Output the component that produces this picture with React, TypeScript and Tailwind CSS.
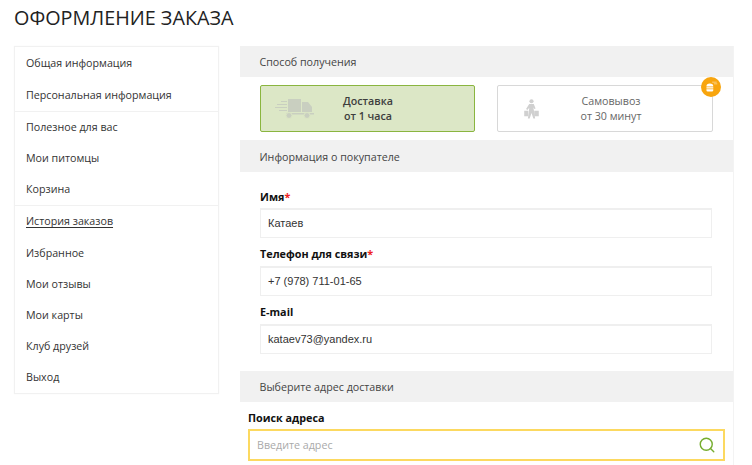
import React from 'react';
import { Search } from 'lucide-react';

const menuGroups = [
  ['Общая информация', 'Персональная информация'],
  ['Полезное для вас', 'Мои питомцы', 'Корзина'],
  ['История заказов', 'Избранное', 'Мои отзывы', 'Мои карты', 'Клуб друзей', 'Выход'],
];

const SectionHeader = ({ title, height }: { title: string; height: string }) => (
  <div className={`${height} flex items-center bg-[#f1f1f1] pl-[19.500px] pt-[2px] text-[10.700px] text-[#444]`}>{title}</div>
);

const Field = ({ label, value, required, top, gap }: { label: string; value: string; required?: boolean; top: string; gap: string }) => (
  <div className={top}>
    <div className="h-[17px] text-[10.800px] leading-[17px] font-bold text-[#111]">
      {label}
      {required && <span className="text-[#ee2222]">*</span>}
    </div>
    <div className={`${gap} h-[30px] w-[452px] border border-t-2 border-[#efefef] pl-[7px] font-['Liberation_Sans',sans-serif] text-[11px] leading-[26px] text-[#333]`}>
      {value}
    </div>
  </div>
);

const TruckIcon = () => (
  <svg width="39" height="20" viewBox="0 0 39 20" fill="#c9cfc0">
    <path d="M13 0h13v13H13zM27 3h6l4 5v5H27z" />
    <path d="M6 2h6v1H6zM2 5h10v1H2zM0 8h12v1H0zM4 11h8v1H4z" />
    <path d="M11 14h28v1.500H11z" />
    <circle cx="14" cy="16.500" r="3" stroke="#dbe6c4" />
    <circle cx="32" cy="16.500" r="3" stroke="#dbe6c4" />
  </svg>
);

const PickupIcon = () => (
  <svg width="15" height="20" viewBox="0 0 16 22" fill="#d0d0d0">
    <circle cx="8" cy="2.500" r="2.300" />
    <path d="M5.500 5.500h5l2 5-1.500.5-1-2 1 5.500 1 7h-2l-2-6-2 6h-2l1-7 .5-5-2 2.500-1.500-1z" />
    <path d="M0 13h4.500v6H0zM11 13h5v6h-5z" />
  </svg>
);

const App = () => (
  <div className="h-[465px] w-[752px] overflow-hidden bg-white font-['Open_Sans',sans-serif]">
    <h1 className="h-[46px] pl-[14px] pt-[5px] text-[19.800px] leading-[26px] font-normal text-[#222]">
      ОФОРМЛЕНИЕ ЗАКАЗА
    </h1>
    <div className="flex items-start">
      <nav className="ml-[14px] h-[348px] w-[205px] border border-[#f1f1f1] pt-[1.400px] shadow-[0_0_1px_#f0f0f0]">
        {menuGroups.map((group, i) => (
          <div key={i} className={i > 0 ? 'border-t border-[#f1f1f1]' : ''}>
            {group.map((item) => (
              <div
                key={item}
                className={`h-[31.200px] pl-[11px] text-[10.700px] leading-[31.200px] text-[#333] ${
                  item === 'История заказов' ? 'underline underline-offset-2' : ''
                }`}
              >
                {item}
              </div>
            ))}
          </div>
        ))}
      </nav>

      <main className="ml-[21px] h-[419px] w-[494px] border-r border-[#f3f3f3]">
        <SectionHeader title="Способ получения" height="h-[31px]" />
        <div className="relative flex h-[63px] gap-[22px] pl-[20px] pt-[8px]">
          <div className="flex h-[47px] w-[215px] items-center rounded-[2px] border border-[#8ab53f] bg-[#dce7c6] pl-[14px] text-[10.700px] leading-[15px] font-semibold text-[#3d3d3d]">
            <TruckIcon />
            <div className="ml-[4px] w-[100px] text-center">
              Доставка
              <br />
              от 1 часа
            </div>
          </div>
          <div className="relative flex h-[47px] w-[216px] items-center rounded-[2px] border border-[#d8d8d8] pl-[26px] text-[10.700px] leading-[15px] text-[#666]">
            <PickupIcon />
            <div className="ml-[22px] w-[100px] text-center">
              Самовывоз
              <br />
              от 30 минут
            </div>
            <div className="absolute -right-[9px] -top-[9px] flex h-[20px] w-[20px] items-center justify-center rounded-full bg-[#f8a50e]">
              <svg width="16" height="16" viewBox="0 0 14 14" fill="#fff">
                <path d="M3 6.500a3 2.500 0 0 1 6 0zM3 7.300h6v1H3zM3 9h6v.8a1.200 1.200 0 0 1-1.200 1.200H4.200A1.200 1.200 0 0 1 3 9.800z" />
                <path d="M8 2.500h4v.6H8zM9.500 4h3v.6h-3z" opacity="0.6" />
              </svg>
            </div>
          </div>
        </div>
        <SectionHeader title="Информация о покупателе" height="h-[32px]" />
        <div className="h-[199px] pl-[20px] pt-[16px]">
          <Field label="Имя" value="Катаев" required top="" gap="mt-[3px]" />
          <Field label="Телефон для связи" value="+7 (978) 711-01-65" required top="mt-[7px]" gap="mt-[4px]" />
          <Field label="E-mail" value="kataev73@yandex.ru" top="mt-[7px]" gap="mt-[4px]" />
        </div>
        <SectionHeader title="Выберите адрес доставки" height="h-[31px]" />
        <div className="pl-[8px] pt-[7px]">
          <div className="h-[17px] text-[10.800px] leading-[17px] font-bold text-[#111]">Поиск адреса</div>
          <div className="mt-[3px] flex h-[32px] w-[477px] items-center justify-between border-2 border-[#fcd960] pl-[7px] pr-[7px] text-[10.700px] text-[#aaa]">
            Введите адрес
            <Search size={18} strokeWidth={1.900} className="text-[#76ad2f]" />
          </div>
        </div>
      </main>
    </div>
  </div>
);

export default App;
